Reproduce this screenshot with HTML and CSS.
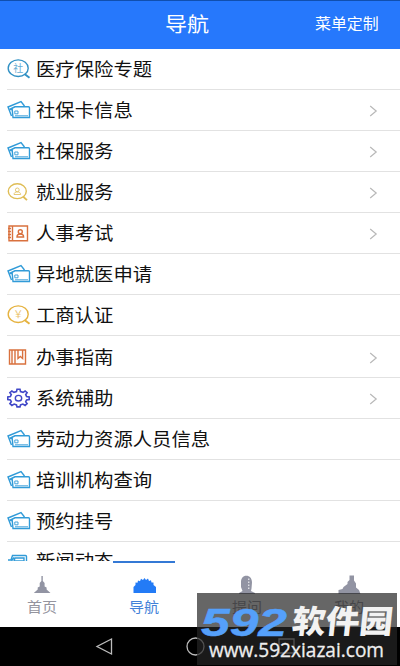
FILE: index.html
```html
<!DOCTYPE html>
<html lang="zh-CN">
<head>
<meta charset="utf-8">
<title>导航</title>
<link rel="stylesheet" href="styles.css">
</head>
<body>
<svg class="defs" width="0" height="0">
  <symbol id="card" viewBox="0 0 24 20"><path d="M4.500 16 1 7l13-5.500L17.500 6" /><path d="M2.500 9.500 8 6.800H21.500a1 1 0 0 1 1 1V17.500H6L5.200 9.500z"/><path d="M7.800 11h3.200v2.800H7.800zM8 15.800h13" stroke-width=".9"/></symbol>
  <symbol id="lens" viewBox="0 0 24 20"><ellipse cx="11.200" cy="9.200" rx="10" ry="8.300"/><path d="m17.500 15 5 3.800" stroke-width="2"/></symbol>
  <symbol id="lens-user" viewBox="0 0 24 20"><ellipse cx="10.300" cy="9.200" rx="9" ry="7.400"/><path d="m16 14.500 4 3.700" stroke-width="1.800"/><path d="M7 12.500c0-2 1.500-2.600 3.300-2.600s3.300.6 3.300 2.600z" stroke-width=".8"/><circle cx="10.300" cy="7.900" r="1.900" stroke-width=".8"/></symbol>
  <symbol id="book-user" viewBox="0 0 24 20"><path d="M2 3h18.500v14.800H2zM5.500 3v14.500M1 5.500h3M1 8.500h3M1 11.500h3M1 14.500h3"/><circle cx="13.300" cy="8.800" r="2"/><path d="M10 14c0-2.500 1.500-3 3.300-3s3.300.5 3.300 3z"/></symbol>
  <symbol id="book" viewBox="0 0 24 20"><path d="M2.500 3h16v14h-16zM5 3v14M8 3v14M11 3V11.500l2.300-2 2.300 2V3"/></symbol>
  <symbol id="gear" viewBox="0 0 24 20"><path d="m9.500 3.500.5-2.200h3l.5 2.200 2.600.8 2-1.300 2 1.700-1.400 2 .9 1.900 2.600.4v2.500l-2.600.4-.9 1.800 1.400 2-2 1.700-2.200-1.300-2.400.8-.5 2h-3l-.5-2-2.400-.8-2.200 1.300-2-1.700 1.400-2-.9-1.800-2.600-.4V9l2.600-.4.9-1.900-1.400-2 2-1.700 2 1.300z" stroke-width="1.600"/><ellipse cx="11.500" cy="10.200" rx="3.200" ry="2.800"/></symbol>
  <symbol id="arrow" viewBox="0 0 9 12"><path d="m1.200 1 6 5-6 5"/></symbol>
</svg>
<div class="screen">
  <header class="bar"><span></span><h1><span class="wide">导航</span></h1><span class="custom"><span class="wide">菜单定制</span></span></header>
  <main class="list">
    <div class="row"><svg class="icon teal"><use href="#lens"/><text class="mark" x="6.300" y="12.800">社</text></svg><span class="wide">医疗保险专题</span></div>
    <div class="row"><svg class="icon blue"><use href="#card"/></svg><span class="wide">社保卡信息</span><svg class="arrow"><use href="#arrow"/></svg></div>
    <div class="row"><svg class="icon blue"><use href="#card"/></svg><span class="wide">社保服务</span><svg class="arrow"><use href="#arrow"/></svg></div>
    <div class="row"><svg class="icon gold"><use href="#lens-user"/></svg><span class="wide">就业服务</span><svg class="arrow"><use href="#arrow"/></svg></div>
    <div class="row"><svg class="icon orange"><use href="#book-user"/></svg><span class="wide">人事考试</span><svg class="arrow"><use href="#arrow"/></svg></div>
    <div class="row"><svg class="icon blue"><use href="#card"/></svg><span class="wide">异地就医申请</span></div>
    <div class="row"><svg class="icon amber"><use href="#lens"/><text class="mark" x="6.300" y="12.800">￥</text></svg><span class="wide">工商认证</span></div>
    <div class="row"><svg class="icon orange"><use href="#book"/></svg><span class="wide">办事指南</span><svg class="arrow"><use href="#arrow"/></svg></div>
    <div class="row"><svg class="icon indigo"><use href="#gear"/></svg><span class="wide">系统辅助</span><svg class="arrow"><use href="#arrow"/></svg></div>
    <div class="row"><svg class="icon blue"><use href="#card"/></svg><span class="wide">劳动力资源人员信息</span></div>
    <div class="row"><svg class="icon blue"><use href="#card"/></svg><span class="wide">培训机构查询</span></div>
    <div class="row"><svg class="icon blue"><use href="#card"/></svg><span class="wide">预约挂号</span></div>
    <div class="row last"><svg class="icon blue"><path d="M1 8h3l1.500-4.500H18.500q1 0 1 1V12M4.500 9 7 5.500M8 6h9v3H7z"/></svg><span class="wide">新闻动态</span></div>
  </main>
  <nav class="tabs">
    <div class="tab"><svg viewBox="0 0 26 20"><path d="M12.400 2h1.400v5l1.800 2v3.500l2 1v2l3.900 3.500H4.800l3.900-3.500v-2l2-1V9l1.700-2z"/></svg><span class="wide">首页</span></div>
    <div class="tab active"><svg viewBox="0 0 26 20"><path d="M1.500 19v-6l2-2V8.500l2 .3.500-2.300 2 .7 1-2.500 2 1.200 1.500-2 1.500 2 2-1.300 1 2.400 2-.7.500 2.300 2-.2v2.700l2.500 2V19z"/></svg><span class="wide">导航</span></div>
    <div class="tab"><svg viewBox="0 0 26 20"><path d="M4 20v-1l3.500-2-1.500-4V8c0-3.500 2-6.200 5.300-6.200S17 4.500 17 8.500l-.5 6-.5 2.500 4 2v1z"/><path class="dots" d="M13.800 4.500v11"/></svg><span class="wide">提问</span></div>
    <div class="tab"><svg viewBox="0 0 26 20"><path d="M1.500 20v-4l4-1 1-2 4-3V8l2-2V1.500h4.500v5l2 3v4l3 2.500 1.500 4z"/></svg><span class="wide">我的</span></div>
  </nav>
  <footer class="keys">
    <svg viewBox="0 0 400 39"><path d="M111.500 12v15L97 19.500z"/><circle cx="195.500" cy="19.500" r="8.500"/><path d="M279 12h15v14h-15z"/></svg>
  </footer>
  <div class="watermark">
    <svg viewBox="0 0 200 72">
      <text class="num" x="4" y="42.500" textLength="86" lengthAdjust="spacingAndGlyphs">592</text>
      <text class="name" transform="translate(94 40) skewX(-6)" textLength="101" lengthAdjust="spacingAndGlyphs">软件园</text>
      <text class="url" x="12" y="64" textLength="175" lengthAdjust="spacingAndGlyphs">www.592xiazai.com</text>
    </svg>
  </div>
</div>
</body>
</html>
```
FILE: styles.css
```css
* { box-sizing: border-box; }
body { margin: 0; font-family: "Noto Sans CJK SC", sans-serif; }
.defs { position: absolute; }
.screen { position: relative; width: 400px; height: 666px; display: flex; flex-direction: column; overflow: hidden; background: #fff; }
.wide { display: inline-block; transform: scaleX(1.075); transform-origin: left center; white-space: nowrap; }
.bar { height: 48.500px; flex: none; display: grid; grid-template-columns: 165px 48px 1fr; align-items: center; background: #2678fc; border-top: 1px solid #104fae; color: #fff; }
.bar h1 { margin: 0; font-size: 20.500px; font-weight: 400; line-height: 44px; padding-bottom: 3px; }
.custom { justify-self: end; width: 85.500px; font-size: 14.800px; line-height: 44px; padding-bottom: 3px; }
.list { height: 512.500px; flex: none; overflow: hidden; padding-left: 7px; }
.row { height: 41.150px; display: flex; align-items: center; border-bottom: 1px solid #e2e2e2; padding-right: 22px; font-size: 18px; line-height: 26px; color: #111; }
.row .wide { margin-left: 5px; padding-bottom: 2px; }
.row.last .wide { padding-bottom: 4px; }
.icon { width: 24px; height: 20px; flex: none; fill: none; stroke: currentColor; stroke-width: 1.400; }
.mark { font-size: 10px; fill: currentColor; stroke: none; opacity: .75; }
.teal { color: #3191c4; }
.blue { color: #319bd8; }
.gold { color: #dfbd55; }
.amber { color: #e5b23f; }
.orange { color: #d9713e; }
.indigo { color: #4148c8; }
.arrow { width: 9px; height: 12px; margin-left: auto; margin-top: 2px; fill: none; stroke: #b8b8b8; stroke-width: 1.200; }
.tabs { height: 66px; flex: none; display: grid; grid-template-columns: 93px 103px 103px 101px; background: #fff; color: #94949e; }
.tab { display: flex; flex-direction: column; align-items: center; padding-top: 13px; font-size: 14px; line-height: 20px; position: relative; }
.tab svg { width: 26px; height: 20px; fill: #9294a3; margin-left: -10px; }
.tab .wide { margin-left: -12px; margin-top: 2px; }
.tab + .tab svg { margin-left: 0; }
.tab + .tab .wide { margin-left: -3px; }
.tab .dots { fill: none; stroke: #fff; stroke-width: 1; stroke-dasharray: 1.500 1.500; }
.tab.active { color: #4381d8; }
.tab.active svg { fill: #237bf6; }
.tab.active::before { content: ""; position: absolute; left: 20px; top: 0; width: 62px; height: 2px; background: #3479d5; }
.keys { height: 39px; background: #000; }
.keys svg { display: block; width: 400px; height: 39px; fill: none; stroke: #bcbcbc; stroke-width: 1.300; }
.watermark { position: absolute; left: 197px; top: 593px; width: 200px; height: 72px; background: rgba(37, 37, 37, .7); }
.watermark svg { display: block; width: 200px; height: 72px; }
.num { font: italic 700 39px "Liberation Sans", sans-serif; fill: #55a0fa; stroke: #55a0fa; stroke-width: .500; }
.name { font: 900 32px "Noto Sans CJK SC", sans-serif; fill: #f2f2f2; }
.url { font: 400 20px "Open Sans", sans-serif; fill: #eee; stroke: #eee; stroke-width: .300; }
```
